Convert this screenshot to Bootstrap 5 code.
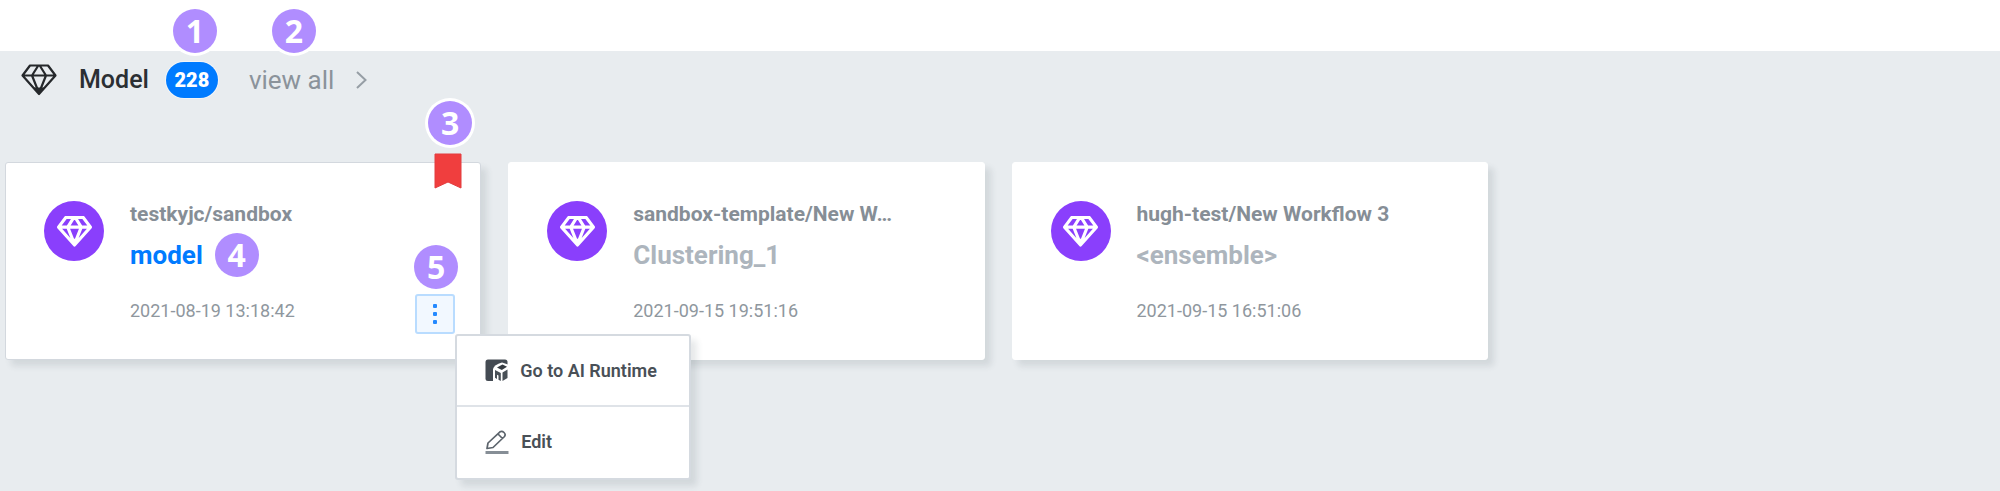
<!DOCTYPE html>
<html lang="en">
<head>
<meta charset="utf-8">
<meta name="viewport" content="width=device-width, initial-scale=1">
<title>Model</title>
<link href="https://cdn.jsdelivr.net/npm/bootstrap@5.3.0/dist/css/bootstrap.min.css" rel="stylesheet">
<style>
  body { font-family: Roboto, "Liberation Sans", sans-serif; background: #fff; padding-top: 51px; }
  .panel { background: #e8ecef; padding: 11px 9px 0 5px; min-height: calc(100vh - 51px); }
  .panel-head { height: 36px; margin-bottom: 64px; padding-left: 16px; line-height: 36px; }
  .panel-title { font-size: 25px; font-weight: 500; line-height: 36px; color: #2b2f33; margin-left: 22px; }
  .count { width: 52px; height: 36px; margin-left: 17px; border-radius: 18px; background: #007bff; color: #fff; font-size: 20px; font-weight: 900; text-align: center; box-shadow: 0 0 0 1px #f3f5f7; }
  .view-all { margin-left: 31px; font-size: 26px; color: #8b939b; text-decoration: none; }
  .view-all svg { margin-left: 21px; }

  /* numbered callouts */
  .step { display: flex; align-items: center; justify-content: center; width: 44px; height: 44px; border-radius: 50%; background: #b08dff; box-shadow: 0 0 0 3px #fff; color: #fff; font: 700 32px/44px "Open Sans", "Noto Sans", sans-serif; }
  .step-count { left: 7px; bottom: 45px; }
  .step-view { left: 23px; bottom: 45px; }
  .step-flag { right: 8px; top: -62px; }
  .step-menu { left: -1px; bottom: 45px; }
  .step-name { margin: -8px 0 -8px 12px; }

  .models { display: grid; grid-template-columns: repeat(auto-fill, minmax(440px, 1fr)); gap: 27px; }
  .model { border: 1px solid #fff; border-radius: 3px; box-shadow: 6px 6px 6px rgba(60, 70, 80, .12); padding: 38px 38px 0; height: 198px; background: #fff; }
  .model.active { border-color: #d3d8de; z-index: 2; }
  .disc { width: 60px; height: 60px; background: #8a3ffc; }
  .model-text { margin-left: 26px; }
  .path { font-size: 21px; line-height: 26px; font-weight: 700; color: #868e96; }
  .model-name { font-size: 26px; line-height: 36px; margin: 10px 0 26px; font-weight: 700; color: #adb5bd; }
  .model-name a { color: #007bff; text-decoration: none; }
  .date { font-size: 18px; line-height: 24px; color: #8f979e; }
  .flag { right: 18px; top: -10px; }
  .more { right: 25px; bottom: 25px; }
  .more-btn { width: 40px; height: 40px; border: 2px solid #b9dcff; border-radius: 3px; background: #f2f8ff; }
  .more .dropdown-menu { --bs-dropdown-min-width: 236px; left: 100%; top: 100%; padding: 0 0 2px; border: 2px solid #d5dae0; border-radius: 3px; box-shadow: 6px 6px 6px rgba(60, 70, 80, .12); }
  .more .dropdown-item { padding: 0 28px; height: 69px; font-size: 18px; font-weight: 600; color: #495057; gap: 12px; }
  .more li + li { border-top: 2px solid #dfe3e8; }
</style>
</head>
<body>
<svg class="d-none">
  <symbol id="diamond" viewBox="0 0 36 32">
    <path d="M9 1.5H27L34.5 11.5 18 30 1.5 11.5ZM1.5 11.5H34.5M17 2 11 11.5 18 29 25 11.5 19 2" fill="none" stroke="currentColor" stroke-linejoin="round"/>
    <path d="M12 23.5H24L18 30.5Z" fill="currentColor"/>
  </symbol>
</svg>
<main class="panel">
  <header class="panel-head d-flex align-items-center">
    <svg width="36" height="32" stroke-width="2.2" color="#25282b"><use href="#diamond"/></svg>
    <h1 class="panel-title mb-0">Model</h1>
    <div class="count position-relative">228<span class="step step-count position-absolute">1</span></div>
    <a href="#" class="view-all position-relative d-flex align-items-center">view all
      <svg width="14" height="20" viewBox="0 0 14 20"><path d="M2 2 10.500 10 2 18" fill="none" stroke="#969ea5" stroke-width="2"/></svg>
      <span class="step step-view position-absolute">2</span>
    </a>
  </header>

  <div class="models">
    <article class="model active position-relative d-flex align-items-start">
      <span class="disc rounded-circle d-flex align-items-center justify-content-center text-white flex-shrink-0"><svg width="35" height="31" stroke-width="3.2"><use href="#diamond"/></svg></span>
      <div class="model-text">
        <div class="path text-nowrap">testkyjc/sandbox</div>
        <h2 class="model-name d-flex align-items-center"><a href="#">model</a><span class="step step-name">4</span></h2>
        <div class="date">2021-08-19 13:18:42</div>
      </div>
      <svg class="flag position-absolute" width="28" height="36" viewBox="0 0 28 36"><path d="M1 1H27V35L14 29 1 35Z" fill="#f03e3e" stroke="#e23c3f"/></svg>
      <span class="step step-flag position-absolute">3</span>
      <div class="more position-absolute">
        <button type="button" class="more-btn d-flex align-items-center justify-content-center p-0" aria-label="More actions" aria-expanded="true">
          <svg width="4" height="22" viewBox="0 0 4 22" fill="#2489ff"><rect width="4" height="4" y="1" rx="1"/><rect width="4" height="4" y="9" rx="1"/><rect width="4" height="4" y="17" rx="1"/></svg>
        </button>
        <span class="step step-menu position-absolute">5</span>
        <ul class="dropdown-menu show">
          <li><a class="dropdown-item d-flex align-items-center" href="#">
            <svg width="23" height="23" viewBox="0 0 23 23">
              <rect x=".5" y=".5" width="22" height="21.500" rx="2.500" fill="#444b53"/>
              <path d="M8 22V10Q9 5.500 17 3.500L23 5.500V23H8Z" fill="#fff"/>
              <path d="M12 8.500 17.500 5.500 22 7.800 16.800 11Z" fill="#343a40"/>
              <path d="M10 11 15.800 14V22L13.500 20.800V16.500L12 15.800V20L10 18.800ZM17.500 13.500 22.500 10.500V19L17.500 22Z" fill="#495057"/>
            </svg>Go to AI Runtime</a></li>
          <li><a class="dropdown-item d-flex align-items-center" href="#">
            <svg width="24" height="24" viewBox="0 0 24 24" fill="none" stroke="#5c646c" stroke-width="1.7" stroke-linejoin="round">
              <path d="M2 18.500 3 13 15 1.800Q17 .5 19 2.500T19.500 6.500L8 17.500ZM13 4 17.500 8.500"/>
              <path d="M.5 22.500H23.500" stroke="#868e96" stroke-width="3"/>
            </svg>Edit</a></li>
        </ul>
      </div>
    </article>

    <article class="model d-flex align-items-start">
      <span class="disc rounded-circle d-flex align-items-center justify-content-center text-white flex-shrink-0"><svg width="35" height="31" stroke-width="3.2"><use href="#diamond"/></svg></span>
      <div class="model-text">
        <div class="path text-nowrap">sandbox-template/New W…</div>
        <h2 class="model-name">Clustering_1</h2>
        <div class="date">2021-09-15 19:51:16</div>
      </div>
    </article>

    <article class="model d-flex align-items-start">
      <span class="disc rounded-circle d-flex align-items-center justify-content-center text-white flex-shrink-0"><svg width="35" height="31" stroke-width="3.2"><use href="#diamond"/></svg></span>
      <div class="model-text">
        <div class="path text-nowrap">hugh-test/New Workflow 3</div>
        <h2 class="model-name">&lt;ensemble&gt;</h2>
        <div class="date">2021-09-15 16:51:06</div>
      </div>
    </article>
  </div>
</main>
<script src="https://cdn.jsdelivr.net/npm/bootstrap@5.3.0/dist/js/bootstrap.bundle.min.js"></script>
</body>
</html>
